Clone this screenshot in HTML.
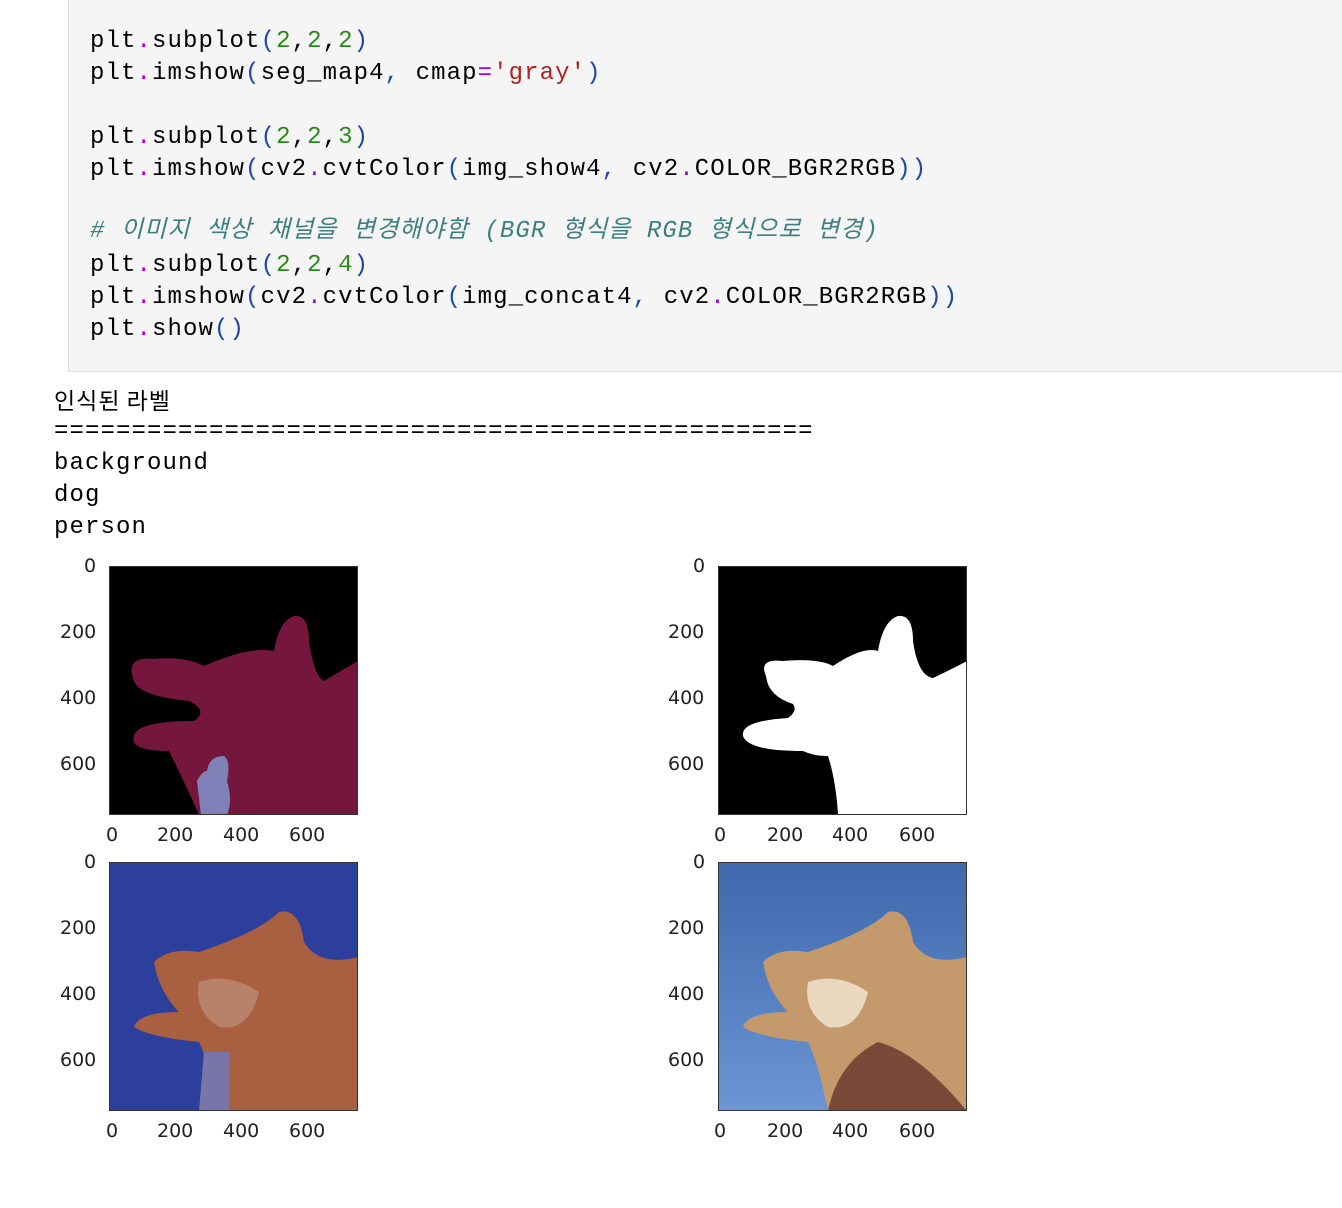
<!DOCTYPE html>
<html><head><meta charset="utf-8"><style>
body{margin:0;background:#fff;width:1342px;height:1208px;overflow:hidden;position:relative;font-family:"Liberation Mono","Noto Sans CJK KR",monospace}
.code{position:absolute;left:68px;top:-2px;width:1290px;height:374px;background:#f5f5f5;border:1px solid #e0e0e0;box-sizing:border-box}
.l{position:absolute;left:90px;font-size:24px;letter-spacing:1.1px;white-space:pre;color:#000;line-height:32px}
.p{color:#a000f0}.n{color:#2a8a1a}.b{color:#1a47a8}.s{color:#b02020}.c{color:#3d7f7f;font-style:italic}
.o{position:absolute;left:54px;font-size:24px;letter-spacing:1.1px;white-space:pre;line-height:32px}
.t{position:absolute;font-family:"DejaVu Sans","Liberation Sans",sans-serif;font-size:19px;color:#222}
svg{position:absolute}
</style></head><body>
<div class="code"></div>
<div class="l" style="top:26px">plt<span class="p">.</span>subplot<span class="b">(</span><span class="n">2</span>,<span class="n">2</span>,<span class="n">2</span><span class="b">)</span></div>
<div class="l" style="top:58px">plt<span class="p">.</span>imshow<span class="b">(</span>seg_map4<span class="b">,</span> cmap<span class="p">=</span><span class="s">'gray'</span><span class="b">)</span></div>
<div class="l" style="top:122px">plt<span class="p">.</span>subplot<span class="b">(</span><span class="n">2</span>,<span class="n">2</span>,<span class="n">3</span><span class="b">)</span></div>
<div class="l" style="top:154px">plt<span class="p">.</span>imshow<span class="b">(</span>cv2<span class="p">.</span>cvtColor<span class="b">(</span>img_show4<span class="b">,</span> cv2<span class="p">.</span>COLOR_BGR2RGB<span class="b">))</span></div>
<div class="l c" style="top:216px"># 이미지 색상 채널을 변경해야함 (BGR 형식을 RGB 형식으로 변경)</div>
<div class="l" style="top:250px">plt<span class="p">.</span>subplot<span class="b">(</span><span class="n">2</span>,<span class="n">2</span>,<span class="n">4</span><span class="b">)</span></div>
<div class="l" style="top:282px">plt<span class="p">.</span>imshow<span class="b">(</span>cv2<span class="p">.</span>cvtColor<span class="b">(</span>img_concat4<span class="b">,</span> cv2<span class="p">.</span>COLOR_BGR2RGB<span class="b">))</span></div>
<div class="l" style="top:314px">plt<span class="p">.</span>show<span class="b">()</span></div>

<div class="o" style="top:383px;font-family:'Noto Sans CJK KR',sans-serif;letter-spacing:1px;font-size:23px">인식된 라벨</div>
<div class="o" style="top:416px">=================================================</div>
<div class="o" style="top:448px">background</div>
<div class="o" style="top:480px">dog</div>
<div class="o" style="top:512px">person</div>

<svg style="left:109px;top:566px" width="249" height="249" viewBox="0 0 249 249">
<rect width="249" height="249" fill="#000"/>
<path d="M25 115 Q15 90 45 93 Q75 90 95 100 Q140 80 165 85 Q170 55 185 50 Q200 48 200 75 Q205 110 215 115 Q240 100 249 95 L249 249 L90 249 Q75 215 60 185 Q20 185 25 170 Q28 155 85 155 Q100 145 80 135 Q30 130 25 115Z" fill="#75173d"/>
<path d="M92 249 L88 215 Q93 205 98 205 Q100 190 115 190 Q122 195 118 215 Q124 235 118 249Z" fill="#8081b9"/>
<rect x="0.5" y="0.5" width="248" height="248" fill="none" stroke="#333"/>
</svg>
<svg style="left:718px;top:566px" width="249" height="249" viewBox="0 0 249 249">
<rect width="249" height="249" fill="#000"/>
<path d="M48 110 Q40 92 65 95 Q100 92 115 100 Q145 80 160 85 Q165 55 180 50 Q195 48 195 75 Q200 110 215 112 Q240 100 249 95 L249 249 L120 249 Q118 215 110 190 Q95 190 85 185 Q30 185 25 170 Q22 155 70 152 Q80 145 75 138 Q50 130 48 110Z" fill="#fff"/>
<rect x="0.5" y="0.5" width="248" height="248" fill="none" stroke="#333"/>
</svg>
<svg style="left:109px;top:862px" width="249" height="249" viewBox="0 0 249 249">
<rect width="249" height="249" fill="#2d3f9c"/>
<path d="M45 100 Q60 85 90 90 Q150 70 170 50 Q190 45 195 80 Q210 105 249 95 L249 249 L110 249 Q100 200 90 180 Q40 175 25 165 Q30 150 70 150 Q50 130 45 100Z" fill="#a86040"/>
<path d="M90 120 Q120 110 150 130 Q140 170 110 165 Q85 150 90 120Z" fill="#b8826a"/>
<path d="M90 249 L95 190 L120 190 L120 249Z" fill="#7a75a8"/>
<rect x="0.5" y="0.5" width="248" height="248" fill="none" stroke="#333"/>
</svg>
<svg style="left:718px;top:862px" width="249" height="249" viewBox="0 0 249 249">
<defs><linearGradient id="g" x1="0" y1="0" x2="0" y2="1"><stop offset="0" stop-color="#3f68ad"/><stop offset="1" stop-color="#6b95d4"/></linearGradient></defs>
<rect width="249" height="249" fill="url(#g)"/>
<path d="M45 100 Q60 85 90 90 Q150 70 170 50 Q190 45 195 80 Q210 105 249 95 L249 249 L110 249 Q100 200 90 180 Q40 175 25 165 Q30 150 70 150 Q50 130 45 100Z" fill="#c49a6c"/>
<path d="M90 120 Q120 110 150 130 Q140 170 110 165 Q85 150 90 120Z" fill="#ead8c0"/>
<path d="M110 249 Q120 200 160 180 Q200 190 249 249Z" fill="#7a4a38"/>
<rect x="0.5" y="0.5" width="248" height="248" fill="none" stroke="#333"/>
</svg>

<div class="t" style="left:84px;top:555px">0</div><div class="t" style="left:60px;top:621px">200</div><div class="t" style="left:60px;top:687px">400</div><div class="t" style="left:60px;top:753px">600</div>
<div class="t" style="left:106px;top:824px">0</div><div class="t" style="left:157px;top:824px">200</div><div class="t" style="left:223px;top:824px">400</div><div class="t" style="left:289px;top:824px">600</div>
<div class="t" style="left:84px;top:851px">0</div><div class="t" style="left:60px;top:917px">200</div><div class="t" style="left:60px;top:983px">400</div><div class="t" style="left:60px;top:1049px">600</div>
<div class="t" style="left:106px;top:1120px">0</div><div class="t" style="left:157px;top:1120px">200</div><div class="t" style="left:223px;top:1120px">400</div><div class="t" style="left:289px;top:1120px">600</div>
<div class="t" style="left:693px;top:555px">0</div><div class="t" style="left:668px;top:621px">200</div><div class="t" style="left:668px;top:687px">400</div><div class="t" style="left:668px;top:753px">600</div>
<div class="t" style="left:714px;top:824px">0</div><div class="t" style="left:767px;top:824px">200</div><div class="t" style="left:832px;top:824px">400</div><div class="t" style="left:899px;top:824px">600</div>
<div class="t" style="left:693px;top:851px">0</div><div class="t" style="left:668px;top:917px">200</div><div class="t" style="left:668px;top:983px">400</div><div class="t" style="left:668px;top:1049px">600</div>
<div class="t" style="left:714px;top:1120px">0</div><div class="t" style="left:767px;top:1120px">200</div><div class="t" style="left:832px;top:1120px">400</div><div class="t" style="left:899px;top:1120px">600</div>
</body></html>
